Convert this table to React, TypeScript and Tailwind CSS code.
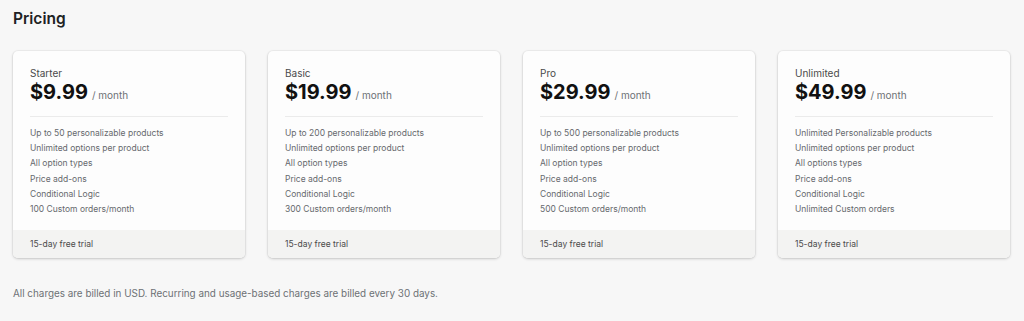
const plans = [
  {
    name: 'Starter',
    price: '$9.99',
    features: [
      'Up to 50 personalizable products',
      'Unlimited options per product',
      'All option types',
      'Price add-ons',
      'Conditional Logic',
      '100 Custom orders/month',
    ],
  },
  {
    name: 'Basic',
    price: '$19.99',
    features: [
      'Up to 200 personalizable products',
      'Unlimited options per product',
      'All option types',
      'Price add-ons',
      'Conditional Logic',
      '300 Custom orders/month',
    ],
  },
  {
    name: 'Pro',
    price: '$29.99',
    features: [
      'Up to 500 personalizable products',
      'Unlimited options per product',
      'All option types',
      'Price add-ons',
      'Conditional Logic',
      '500 Custom orders/month',
    ],
  },
  {
    name: 'Unlimited',
    price: '$49.99',
    features: [
      'Unlimited Personalizable products',
      'Unlimited options per product',
      'All options types',
      'Price add-ons',
      'Conditional Logic',
      'Unlimited Custom orders',
    ],
  },
];

export default function App() {
  return (
    <div className="min-h-[321px] bg-[#f7f7f7] px-[13px] pt-[9px] font-['Inter',sans-serif] text-[#202223]">
      <h1 className="text-[15.5px] font-semibold leading-[20px]">Pricing</h1>
      <div className="mt-[22px] grid grid-cols-4 gap-[23px] pr-px">
        {plans.map((p) => (
          <div key={p.name} className="overflow-hidden rounded-[5px] bg-[#fdfdfd] shadow-[0_1px_3px_rgba(0,0,0,0.18),0_0_0_1px_rgba(0,0,0,0.03)]">
            <div className="px-[17px] pt-[15px] pb-[13px]">
              <div className="text-[10px] leading-[14px] text-[#4a4a4a]">{p.name}</div>
              <div className="flex items-baseline gap-[4px] leading-[24px]">
                <span className="text-[20px] font-bold text-[#111]">{p.price}</span>
                <span className="text-[10px] text-[#6d7175]">/ month</span>
              </div>
              <div className="mt-[9px] border-t border-[#ebebeb]" />
              <ul className="mt-[9px] flex flex-col text-[8.5px] leading-[15.2px] text-[#66696d]">
                {p.features.map((f) => (
                  <li key={f}>{f}</li>
                ))}
              </ul>
            </div>
            <div className="bg-[#f3f3f2] px-[17px] text-[8.5px] leading-[28px] text-[#4a4a4a]">15-day free trial</div>
          </div>
        ))}
      </div>
      <p className="mt-[28px] text-[9.9px] leading-[14px] text-[#6d7175]">
        All charges are billed in USD. Recurring and usage-based charges are billed every 30 days.
      </p>
    </div>
  );
}
